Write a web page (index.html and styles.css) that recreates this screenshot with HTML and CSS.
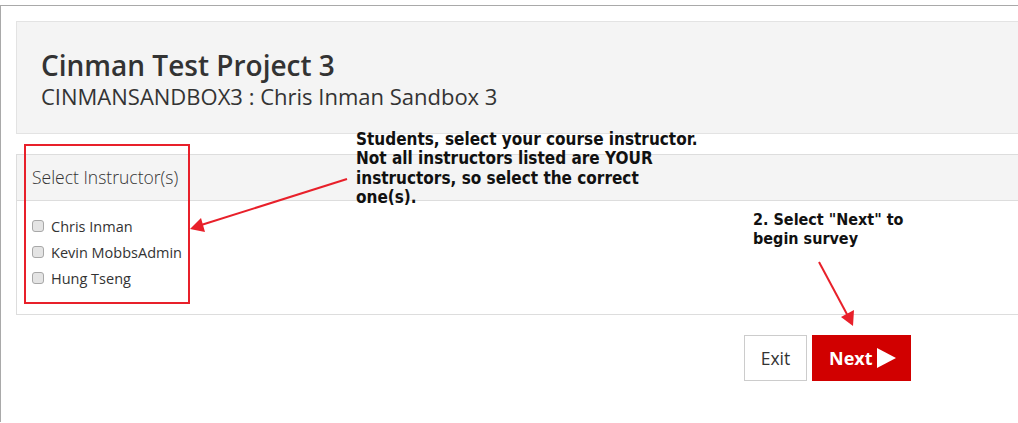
FILE: index.html
```html
<!DOCTYPE html>
<html lang="en">
<head>
    <meta charset="UTF-8">
    <title>Select Instructor</title>
    <link rel="stylesheet" href="styles.css">
</head>
<body>
    <div class="frame">
        <div class="page-header">
            <h1>Cinman Test Project 3</h1>
            <h2>CINMANSANDBOX3 : Chris Inman Sandbox 3</h2>
        </div>

        <div class="panel">
            <div class="panel-heading">Select Instructor(s)</div>
            <div class="panel-body">
                <label class="check"><input type="checkbox"> Chris Inman</label>
                <label class="check"><input type="checkbox"> Kevin MobbsAdmin</label>
                <label class="check"><input type="checkbox"> Hung Tseng</label>
            </div>
        </div>

        <div class="actions">
            <button type="button" class="btn btn-exit">Exit</button>
            <button type="button" class="btn btn-next">Next
                <svg class="play" width="19" height="20" viewBox="0 0 19 20"><polygon points="0,0 19,10 0,20" fill="#fff"/></svg>
            </button>
        </div>

        <!-- annotations drawn over the screenshot -->
        <div class="callout-box"></div>
        <p class="note note-one">Students, select your course instructor.<br>Not all instructors listed are YOUR<br>instructors, so select the correct<br>one(s).</p>
        <p class="note note-two">2. Select "Next" to<br>begin survey</p>
        <svg class="arrows" width="1018" height="423" viewBox="0 0 1018 423">
            <line x1="347" y1="179" x2="198" y2="226" stroke="#e8202a" stroke-width="2"/>
            <polygon points="190,229 201,218 205,232" fill="#e8202a"/>
            <line x1="819" y1="262" x2="849" y2="318" stroke="#e8202a" stroke-width="2"/>
            <polygon points="853,326 841,317 854,310" fill="#e8202a"/>
        </svg>
    </div>
</body>
</html>
```

FILE: styles.css
```css
body {
    margin: 0;
    font-family: "Open Sans", "Noto Sans", sans-serif;
    color: #333;
    background-color: #fff;
    overflow: hidden;
}

.frame {
    position: relative;
    margin-top: 5px;
    height: 417px;
    padding: 15px 0 0 15px;
    border-top: 1px solid #a9a9a9;
    border-left: 1px solid #a9a9a9;
    box-sizing: border-box;
}

.page-header {
    background-color: #f4f4f4;
    border: 1px solid #e3e3e3;
    border-right: 0;
    height: 113px;
    box-sizing: border-box;
    padding: 25px 24px 0;
}

.page-header h1 {
    margin: 0;
    font-size: 28px;
    font-weight: 600;
    line-height: 36px;
}

.page-header h2 {
    margin: 0;
    font-size: 22px;
    font-weight: 500;
    line-height: 27px;
}

.panel {
    margin-top: 20px;
    border: 1px solid #ddd;
    border-right: 0;
}

.panel-heading {
    background-color: #f4f4f4;
    border-bottom: 1px solid #ddd;
    height: 45px;
    padding-left: 15px;
    font-size: 17.5px;
    font-weight: 300;
    line-height: 45px;
}

.panel-body {
    display: flex;
    flex-direction: column;
    padding: 12px 15px 23px;
}

.check {
    display: flex;
    align-items: center;
    gap: 7px;
    height: 26px;
    font-size: 14.5px;
}

.check input {
    appearance: none;
    margin: 0;
    width: 12px;
    height: 12px;
    border: 1px solid #a8a8a8;
    border-radius: 3px;
    background-color: #e4e4e4;
}

.actions {
    display: flex;
    gap: 5px;
    margin-top: 20px;
    padding-left: 728px;
}

.btn {
    height: 46px;
    font-family: "Open Sans", "Noto Sans", sans-serif;
    border-radius: 0;
    cursor: pointer;
}

.btn-exit {
    width: 63px;
    background-color: #fff;
    border: 1px solid #ccc;
    color: #333;
    font-size: 17.5px;
}

.btn-next {
    display: flex;
    align-items: center;
    gap: 4px;
    width: 99px;
    padding: 0 0 0 16px;
    background-color: #d10000;
    border: 1px solid #d10000;
    color: #fff;
    font-size: 18px;
    font-weight: 700;
}

.callout-box {
    position: absolute;
    left: 23px;
    top: 138px;
    width: 162px;
    height: 156px;
    border: 2px solid #e8202a;
}

.note {
    position: absolute;
    margin: 0;
    font-family: "DejaVu Sans Condensed", "DejaVu Sans", sans-serif;
    font-weight: bold;
    color: #111;
}

.note-one {
    left: 355px;
    top: 124px;
    font-size: 17px;
    line-height: 19.3px;
}

.note-two {
    left: 752px;
    top: 205px;
    font-size: 16px;
    line-height: 18.5px;
}

.arrows {
    position: absolute;
    left: -1px;
    top: -6px;
    pointer-events: none;
}
```
